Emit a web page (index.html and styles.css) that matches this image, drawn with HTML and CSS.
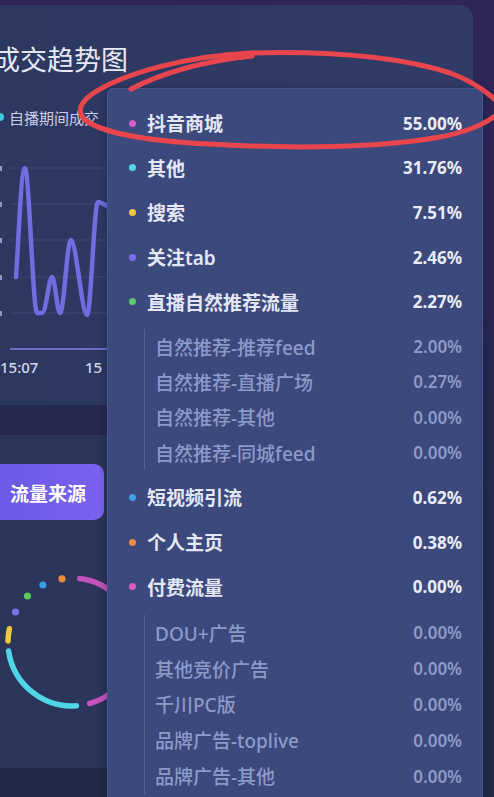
FILE: index.html
```html
<!DOCTYPE html>
<html lang="zh-CN">
<head>
<meta charset="utf-8">
<title>成交趋势图</title>
<link rel="stylesheet" href="styles.css">
</head>
<body>
<div class="page">
  <section class="card card-trend">
    <h2 class="title">成交趋势图</h2>
    <div class="legend"><span class="legend-dot"></span><span>自播期间成交</span></div>
    <svg class="chart" width="473" height="245" viewBox="0 0 473 245">
      <g class="ticks">
        <rect x="0" y="26" width="2" height="5"></rect>
        <rect x="0" y="62" width="2" height="5"></rect>
        <rect x="0" y="98" width="2" height="5"></rect>
        <rect x="0" y="135" width="2" height="5"></rect>
        <rect x="0" y="171" width="2" height="5"></rect>
      </g>
      <g class="grid">
        <line x1="10" y1="28" x2="470" y2="28"></line>
        <line x1="10" y1="64" x2="470" y2="64"></line>
        <line x1="10" y1="100" x2="470" y2="100"></line>
        <line x1="10" y1="137" x2="470" y2="137"></line>
        <line x1="10" y1="173" x2="470" y2="173"></line>
      </g>
      <line class="axis" x1="10" y1="209" x2="470" y2="209"></line>
      <path class="series" d="M16,137 C19,95 21,28 25,28 C29,28 33,173 37,173 L42,173 C46,173 49,137 52,137 C55,137 57,173 60,173 C64,173 67,100 71,100 C76,100 82,175 87,175 C91,175 94,62 98,62 C101,62 104,64 110,68"></path>
      <text class="xlabel" x="0" y="233">15:07</text>
      <text class="xlabel" x="85" y="233">15</text>
    </svg>
  </section>

  <section class="card card-source">
    <div class="tab">流量来源</div>
    <svg class="donut" width="473" height="200" viewBox="0 0 473 200">
      <path class="arc" stroke="#c452bd" d="M79.8,38.5 A64,64 0 0 1 89.6,163.5"></path>
      <path class="arc" stroke="#4fd6e6" d="M76.5,165.8 A64,64 0 0 1 8.6,110.9"></path>
      <path class="arc" stroke="#f0c93a" d="M8.0,100.9 A64,64 0 0 1 9.4,88.7"></path>
      <circle cx="15.5" cy="72" r="3.6" fill="#7a70ea"></circle>
      <circle cx="27.5" cy="56" r="3.6" fill="#5cc65a"></circle>
      <circle cx="42.9" cy="45" r="3.6" fill="#3a9ce6"></circle>
      <circle cx="62" cy="38.8" r="3.6" fill="#ef8b3a"></circle>
    </svg>
  </section>

  <div class="tooltip">
    <div class="row"><span class="dot" style="background:#d45ccb"></span><span class="label">抖音商城</span><span class="val">55.00%</span></div>
    <div class="row"><span class="dot" style="background:#4fd8e8"></span><span class="label">其他</span><span class="val">31.76%</span></div>
    <div class="row"><span class="dot" style="background:#f3c83f"></span><span class="label">搜索</span><span class="val">7.51%</span></div>
    <div class="row"><span class="dot" style="background:#7b6ff0"></span><span class="label">关注tab</span><span class="val">2.46%</span></div>
    <div class="row"><span class="dot" style="background:#5ccd6a"></span><span class="label">直播自然推荐流量</span><span class="val">2.27%</span></div>
    <div class="sub">
      <div class="subrow"><span class="label">自然推荐-推荐feed</span><span class="val">2.00%</span></div>
      <div class="subrow"><span class="label">自然推荐-直播广场</span><span class="val">0.27%</span></div>
      <div class="subrow"><span class="label">自然推荐-其他</span><span class="val">0.00%</span></div>
      <div class="subrow"><span class="label">自然推荐-同城feed</span><span class="val">0.00%</span></div>
    </div>
    <div class="row"><span class="dot" style="background:#3ea0ea"></span><span class="label">短视频引流</span><span class="val">0.62%</span></div>
    <div class="row"><span class="dot" style="background:#f08a3c"></span><span class="label">个人主页</span><span class="val">0.38%</span></div>
    <div class="row"><span class="dot" style="background:#e05bbf"></span><span class="label">付费流量</span><span class="val">0.00%</span></div>
    <div class="sub sub-paid">
      <div class="subrow"><span class="label">DOU+广告</span><span class="val">0.00%</span></div>
      <div class="subrow"><span class="label">其他竞价广告</span><span class="val">0.00%</span></div>
      <div class="subrow"><span class="label">千川PC版</span><span class="val">0.00%</span></div>
      <div class="subrow"><span class="label">品牌广告-toplive</span><span class="val">0.00%</span></div>
      <div class="subrow"><span class="label">品牌广告-其他</span><span class="val">0.00%</span></div>
    </div>
  </div>

  <svg class="annotation" width="494" height="797" viewBox="0 0 494 797">
    <path d="M502,106 C488,92 470,80 450,73 C400,57 330,51 250,53 C190,56 125,72 92,94 C80,103 77,111 84,119 C100,133 150,141 210,144 C290,149 380,148 440,137 C472,131 490,122 502,110"></path>
    <path d="M131,89 C162,73 205,61 252,56"></path>
  </svg>
</div>
</body>
</html>
```

FILE: styles.css
```css
html, body {
  margin: 0;
  padding: 0;
  width: 494px;
  height: 797px;
  overflow: hidden;
}

body {
  background: linear-gradient(180deg, #2f2558 0%, #2b2754 30%, #242a4e 60%, #222848 100%);
  font-family: "Noto Sans", "Noto Sans CJK SC", sans-serif;
  color: #e4e7f4;
}

.page {
  position: relative;
  width: 494px;
  height: 797px;
  padding-top: 5px;
  box-sizing: border-box;
}

.card {
  box-sizing: border-box;
  width: 473px;
}

.card-trend {
  height: 400px;
  padding-top: 37px;
  background: linear-gradient(90deg, #2d3861 0%, #303c67 100%);
  border-radius: 0 14px 0 0;
}

.title {
  margin: 0 0 0 -7px;
  font-size: 27px;
  line-height: 33px;
  font-weight: 400;
  color: #e6e9f5;
  font-family: "Noto Sans CJK SC", sans-serif;
}

.legend {
  display: flex;
  align-items: center;
  gap: 5px;
  margin: 32px 0 0 -4px;
  height: 20px;
  font-size: 15px;
  color: #c9cee7;
  font-family: "Noto Sans CJK SC", sans-serif;
}

.legend-dot {
  width: 8px;
  height: 8px;
  border-radius: 50%;
  background: #3cc7e2;
}

.chart {
  display: block;
  margin-top: 13px;
}

.ticks rect {
  fill: #8e97c2;
}

.grid line {
  stroke: #3e4975;
  stroke-width: 1;
}

.axis {
  stroke: #6b6ec9;
  stroke-width: 2;
}

.series {
  fill: none;
  stroke: #716de0;
  stroke-width: 4.5;
  stroke-linecap: round;
  stroke-linejoin: round;
}

.xlabel {
  fill: #d3d7ec;
  font-size: 15px;
  font-weight: 500;
  font-family: "Noto Sans", sans-serif;
}

.card-source {
  margin-top: 30px;
  height: 333px;
  padding-top: 29px;
  background: #2b3559;
}

.tab {
  display: flex;
  align-items: center;
  width: 104px;
  height: 56px;
  box-sizing: border-box;
  padding-left: 10px;
  border-radius: 0 10px 10px 0;
  background: linear-gradient(90deg, #6a5ae6 0%, #7c62f1 100%);
  color: #ffffff;
  font-size: 19px;
  font-weight: 700;
  font-family: "Noto Sans CJK SC", sans-serif;
}

.donut {
  display: block;
  margin-top: 20px;
}

.arc {
  fill: none;
  stroke-width: 5.5;
  stroke-linecap: round;
}

.tooltip {
  position: absolute;
  left: 107px;
  top: 88px;
  width: 376px;
  height: 760px;
  box-sizing: border-box;
  padding: 12px 20px 0 21px;
  background: #3b497d;
  border: 1px solid #46558a;
  border-radius: 6px;
  box-shadow: 0 2px 10px rgba(10, 14, 40, 0.35);
  font-family: "Noto Sans", "Noto Sans CJK SC", sans-serif;
}

.row {
  display: flex;
  align-items: center;
  height: 44.6px;
}

.dot {
  flex: none;
  width: 7px;
  height: 7px;
  border-radius: 50%;
  margin-right: 11px;
}

.row .label {
  flex: 1;
  font-size: 19px;
  font-weight: 600;
  color: #e3e7f6;
}

.row .val {
  font-size: 17px;
  font-weight: 700;
  color: #e9ecf8;
}

.sub {
  margin: 5px 0 5px 15px;
  padding-left: 10px;
  border-left: 1px solid #56629a;
}

.sub-paid {
  margin-top: 6px;
}

.subrow {
  display: flex;
  align-items: center;
  height: 35.3px;
}

.sub-paid .subrow {
  height: 35.8px;
}

.subrow .label {
  flex: 1;
  font-size: 19px;
  font-weight: 500;
  color: #8d99c9;
}

.subrow .val {
  font-size: 17px;
  font-weight: 600;
  color: #8d99c9;
}

.annotation {
  position: absolute;
  left: 0;
  top: 0;
  pointer-events: none;
}

.annotation path {
  fill: none;
  stroke: #e8464c;
  stroke-width: 5;
  stroke-linecap: round;
  stroke-linejoin: round;
}
```
